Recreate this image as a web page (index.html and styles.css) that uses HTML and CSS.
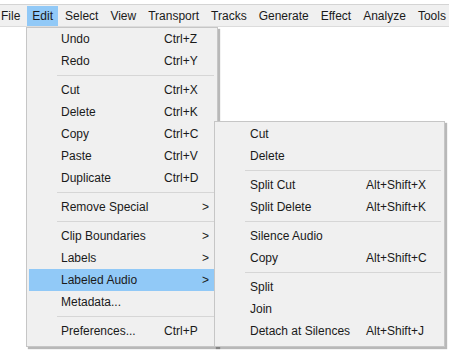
FILE: index.html
```html
<!DOCTYPE html>
<html>
<head>
<meta charset="utf-8">
<link rel="stylesheet" href="styles.css">
</head>
<body>
<div class="menubar">
  <span class="mi first">File</span>
  <span class="mi active">Edit</span>
  <span class="mi">Select</span>
  <span class="mi">View</span>
  <span class="mi">Transport</span>
  <span class="mi">Tracks</span>
  <span class="mi">Generate</span>
  <span class="mi">Effect</span>
  <span class="mi">Analyze</span>
  <span class="mi">Tools</span>
</div>
<div class="menu edit">
  <div class="item"><span class="label">Undo</span><span class="key">Ctrl+Z</span></div>
  <div class="item"><span class="label">Redo</span><span class="key">Ctrl+Y</span></div>
  <div class="sep"></div>
  <div class="item"><span class="label">Cut</span><span class="key">Ctrl+X</span></div>
  <div class="item"><span class="label">Delete</span><span class="key">Ctrl+K</span></div>
  <div class="item"><span class="label">Copy</span><span class="key">Ctrl+C</span></div>
  <div class="item"><span class="label">Paste</span><span class="key">Ctrl+V</span></div>
  <div class="item"><span class="label">Duplicate</span><span class="key">Ctrl+D</span></div>
  <div class="sep"></div>
  <div class="item"><span class="label">Remove Special</span><span class="arrow">&gt;</span></div>
  <div class="sep"></div>
  <div class="item"><span class="label">Clip Boundaries</span><span class="arrow">&gt;</span></div>
  <div class="item"><span class="label">Labels</span><span class="arrow">&gt;</span></div>
  <div class="item hl"><span class="label">Labeled Audio</span><span class="arrow">&gt;</span></div>
  <div class="item"><span class="label">Metadata...</span></div>
  <div class="sep"></div>
  <div class="item"><span class="label">Preferences...</span><span class="key">Ctrl+P</span></div>
</div>
<div class="menu sub">
  <div class="item"><span class="label">Cut</span></div>
  <div class="item"><span class="label">Delete</span></div>
  <div class="sep"></div>
  <div class="item"><span class="label">Split Cut</span><span class="key">Alt+Shift+X</span></div>
  <div class="item"><span class="label">Split Delete</span><span class="key">Alt+Shift+K</span></div>
  <div class="sep"></div>
  <div class="item"><span class="label">Silence Audio</span></div>
  <div class="item"><span class="label">Copy</span><span class="key">Alt+Shift+C</span></div>
  <div class="sep"></div>
  <div class="item"><span class="label">Split</span></div>
  <div class="item"><span class="label">Join</span></div>
  <div class="item"><span class="label">Detach at Silences</span><span class="key">Alt+Shift+J</span></div>
</div>
</body>
</html>
```
FILE: styles.css
```css
html, body {
  margin: 0;
  padding: 0;
  background: #ffffff;
  font-family: "Liberation Sans", Arial, sans-serif;
  font-size: 12px;
  color: #1a1a1a;
  overflow: hidden;
}
.menubar {
  margin-top: 4px;
  border-top: 1px solid #d4d4d4;
  border-bottom: 1px solid #dcdcdc;
  box-shadow: 0 1px 0 #b0b0b0;
  background: #f0f0f0;
  display: flex;
  gap: 2px;
  padding-top: 1px;
  white-space: nowrap;
  margin-left: -4px;
}
.mi {
  height: 20px;
  line-height: 21px;
  padding: 0 5px;
}
.mi.active {
  background: #91c9f7;
}
.menu {
  position: absolute;
  box-sizing: border-box;
  background: #f0f0f0;
  border: 1px solid #c6c6c6;
  box-shadow: 2px 2px 1px rgba(0, 0, 0, 0.28);
  padding: 0 2px 4px 2px;
}
.edit {
  left: 26px;
  top: 27px;
  width: 192px;
}
.sub {
  left: 214px;
  top: 121px;
  width: 231px;
  padding-top: 1px;
}
.item {
  height: 22px;
  display: flex;
  align-items: center;
  padding-left: 32px;
  white-space: nowrap;
}
.sub .item {
  padding-left: 33px;
}
.edit .label {
  width: 103px;
}
.sub .label {
  width: 116px;
}
.item.hl {
  background: #91c9f7;
}
.arrow {
  margin-left: auto;
  margin-right: 6px;
}
.sep {
  height: 7px;
  position: relative;
}
.sep::after {
  content: "";
  position: absolute;
  left: 28px;
  right: 1px;
  top: 3px;
  height: 1px;
  background: #d6d6d6;
}
```
